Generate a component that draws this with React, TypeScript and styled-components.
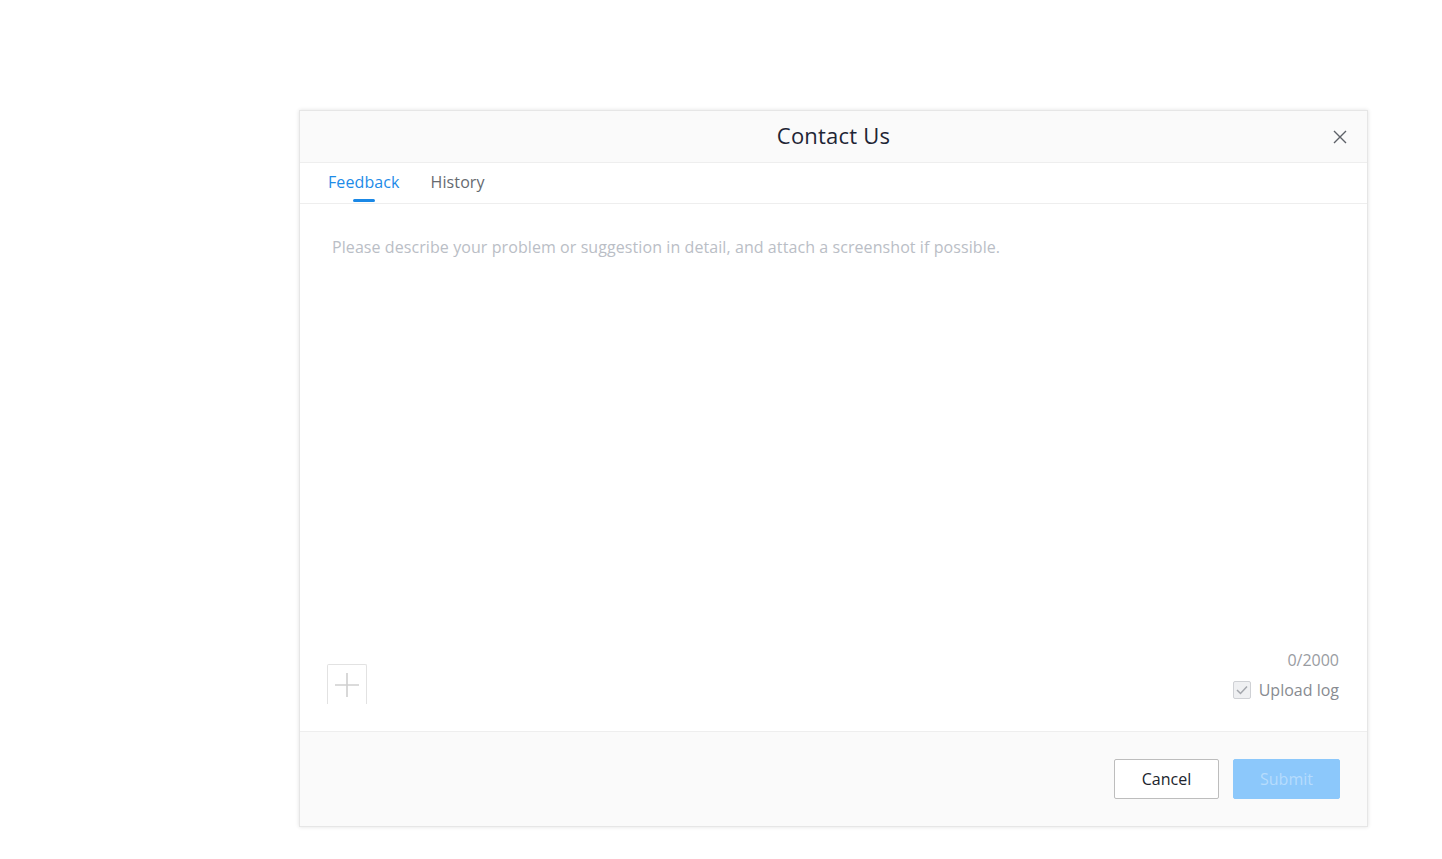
import { useState } from 'react';
import styled, { createGlobalStyle } from 'styled-components';

const GlobalStyle = createGlobalStyle`
  html, body {
    margin: 0;
    padding: 0;
    background: #ffffff;
    font-family: "Open Sans", "Noto Sans", Arial, sans-serif;
  }
  * {
    box-sizing: border-box;
  }
`;

const Page = styled.div`
  width: 100%;
  min-height: 859px;
  padding: 110px 0 0 299px;
`;

const Dialog = styled.div`
  width: 1069px;
  height: 717px;
  display: flex;
  flex-direction: column;
  background: #ffffff;
  border: 1px solid #e6e6e6;
  box-shadow: 0 0 4px rgba(0, 0, 0, 0.12);
`;

const Header = styled.div`
  height: 52px;
  padding-bottom: 3px;
  display: grid;
  grid-template-columns: 1fr auto 1fr;
  align-items: center;
  background: #fafafa;
  border-bottom: 1px solid #eeeeee;
`;

const Title = styled.h2`
  grid-column: 2;
  margin: 0;
  font-size: 22px;
  font-weight: 400;
  color: #1e2535;
  letter-spacing: 0.2px;
`;

const CloseButton = styled.button`
  grid-column: 3;
  justify-self: end;
  margin-right: 16px;
  margin-top: 3px;
  width: 22px;
  height: 22px;
  padding: 0;
  border: none;
  background: transparent;
  display: flex;
  align-items: center;
  justify-content: center;
  cursor: pointer;
`;

const Tabs = styled.div`
  height: 41px;
  display: flex;
  gap: 31px;
  padding-left: 28px;
  padding-bottom: 2px;
  border-bottom: 1px solid #eeeeee;
`;

const Tab = styled.button<{ $active?: boolean }>`
  position: relative;
  padding: 0;
  border: none;
  background: transparent;
  font-family: inherit;
  font-size: 16px;
  letter-spacing: 0.1px;
  color: ${(p) => (p.$active ? '#1d8be8' : '#666a70')};
  cursor: pointer;

  &::after {
    content: '';
    display: ${(p) => (p.$active ? 'block' : 'none')};
    position: absolute;
    left: 50%;
    bottom: -1px;
    width: 22px;
    height: 3px;
    margin-left: -11px;
    border-radius: 2px;
    background: #1a88e6;
  }
`;

const Body = styled.div`
  flex: 1;
  display: flex;
  flex-direction: column;
  padding: 31px 28px 27px 27px;
`;

const TextArea = styled.textarea`
  flex: 1;
  width: 100%;
  margin: 0;
  padding: 0 5px;
  border: none;
  outline: none;
  resize: none;
  font-family: inherit;
  font-size: 16px;
  line-height: 24px;
  letter-spacing: 0.08px;
  color: #333333;
  background: transparent;

  &::placeholder {
    color: #babec6;
  }
`;

const BottomRow = styled.div`
  display: flex;
  justify-content: space-between;
  align-items: flex-end;
`;

const AddImage = styled.button`
  width: 40px;
  height: 40px;
  padding: 0;
  border: 1px solid #e2e2e2;
  border-bottom: none;
  border-radius: 2px 2px 0 0;
  background: #ffffff;
  display: flex;
  align-items: center;
  justify-content: center;
  cursor: pointer;
`;

const Meta = styled.div`
  display: flex;
  flex-direction: column;
  align-items: flex-end;
  gap: 6px;
  margin-bottom: 2px;
`;

const Counter = styled.span`
  font-size: 16px;
  line-height: 24px;
  color: #999ca2;
`;

const CheckLabel = styled.label`
  display: flex;
  align-items: center;
  gap: 8px;
  font-size: 16px;
  line-height: 24px;
  color: #888b91;
  cursor: pointer;
`;

const CheckBox = styled.span`
  width: 18px;
  height: 18px;
  border: 1px solid #cfd1d5;
  border-radius: 2px;
  background: #eff0f2;
  display: flex;
  align-items: center;
  justify-content: center;
`;

const Footer = styled.div`
  height: 95px;
  display: flex;
  justify-content: flex-end;
  align-items: center;
  gap: 14px;
  padding-right: 27px;
  background: #fafafa;
  border-top: 1px solid #eeeeee;
`;

const Button = styled.button<{ $primary?: boolean }>`
  height: 40px;
  padding: 0;
  width: ${(p) => (p.$primary ? '107px' : '105px')};
  border-radius: 2px;
  font-family: inherit;
  font-size: 16px;
  border: 1px solid ${(p) => (p.$primary ? '#8cc8fb' : '#bdbdbd')};
  background: ${(p) => (p.$primary ? '#8cc8fb' : '#ffffff')};
  color: ${(p) => (p.$primary ? '#b6dcfd' : '#20242c')};
  cursor: ${(p) => (p.$primary ? 'not-allowed' : 'pointer')};
`;

const App = () => {
  const [tab, setTab] = useState<'feedback' | 'history'>('feedback');
  const [text, setText] = useState('');
  const [uploadLog, setUploadLog] = useState(true);

  return (
    <>
      <GlobalStyle />
      <Page>
        <Dialog>
          <Header>
            <Title>Contact Us</Title>
            <CloseButton aria-label="Close">
              <svg width="14" height="14" viewBox="0 0 14 14">
                <path d="M1 1 L13 13 M13 1 L1 13" stroke="#5d6168" strokeWidth="1.4" fill="none" />
              </svg>
            </CloseButton>
          </Header>
          <Tabs>
            <Tab $active={tab === 'feedback'} onClick={() => setTab('feedback')}>
              Feedback
            </Tab>
            <Tab $active={tab === 'history'} onClick={() => setTab('history')}>
              History
            </Tab>
          </Tabs>
          <Body>
            <TextArea
              value={text}
              maxLength={2000}
              onChange={(e) => setText(e.target.value)}
              placeholder="Please describe your problem or suggestion in detail, and attach a screenshot if possible."
            />
            <BottomRow>
              <AddImage aria-label="Add screenshot">
                <svg width="26" height="26" viewBox="0 0 26 26">
                  <path d="M13 1 V25 M1 13 H25" stroke="#cfcfcf" strokeWidth="1.6" fill="none" />
                </svg>
              </AddImage>
              <Meta>
                <Counter>{text.length}/2000</Counter>
                <CheckLabel onClick={() => setUploadLog(!uploadLog)}>
                  <CheckBox>
                    {uploadLog && (
                      <svg width="12" height="10" viewBox="0 0 12 10">
                        <path d="M1 5 L4.5 8.5 L11 1.5" stroke="#a4a7ad" strokeWidth="1.5" fill="none" />
                      </svg>
                    )}
                  </CheckBox>
                  Upload log
                </CheckLabel>
              </Meta>
            </BottomRow>
          </Body>
          <Footer>
            <Button>Cancel</Button>
            <Button $primary disabled>
              Submit
            </Button>
          </Footer>
        </Dialog>
      </Page>
    </>
  );
};

export default App;
